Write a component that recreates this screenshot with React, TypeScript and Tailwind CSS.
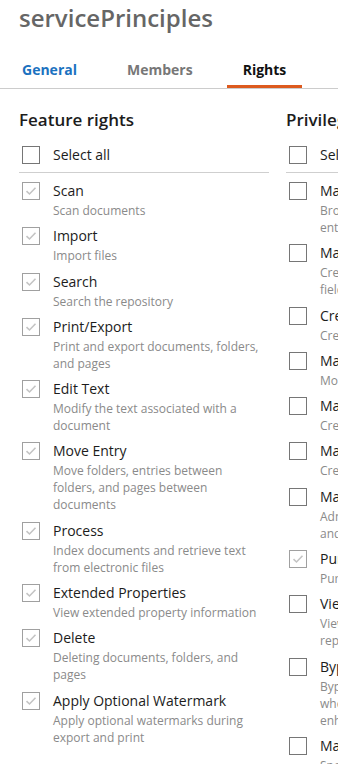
import React from "react";

type Item = { label: string; lines: string[]; checked: boolean };

const feature: Item[] = [
  { label: "Scan", lines: ["Scan documents"], checked: true },
  { label: "Import", lines: ["Import files"], checked: true },
  { label: "Search", lines: ["Search the repository"], checked: true },
  { label: "Print/Export", lines: ["Print and export documents, folders,", "and pages"], checked: true },
  { label: "Edit Text", lines: ["Modify the text associated with a", "document"], checked: true },
  { label: "Move Entry", lines: ["Move folders, entries between", "folders, and pages between", "documents"], checked: true },
  { label: "Process", lines: ["Index documents and retrieve text", "from electronic files"], checked: true },
  { label: "Extended Properties", lines: ["View extended property information"], checked: true },
  { label: "Delete", lines: ["Deleting documents, folders, and", "pages"], checked: true },
  { label: "Apply Optional Watermark", lines: ["Apply optional watermarks during", "export and print"], checked: true },
];

const privileges: Item[] = [
  { label: "Manage Entry Access", lines: ["Browse and modify entry access on all", "entries"], checked: false },
  { label: "Manage Metadata", lines: ["Create and modify templates and", "fields"], checked: false },
  { label: "Create Trustees", lines: ["Create new users and groups"], checked: false },
  { label: "Manage Trustees", lines: ["Modify users and groups"], checked: false },
  { label: "Manage Templates", lines: ["Create and modify templates"], checked: false },
  { label: "Manage Volumes", lines: ["Create and modify volumes"], checked: false },
  { label: "Manage Audit Trail", lines: ["Administer audit trail settings", "and reasons"], checked: false },
  { label: "Purge", lines: ["Purge entries from the recycle bin"], checked: true },
  { label: "View Audit Reports", lines: ["View audit trail events and", "reports"], checked: false },
  { label: "Bypass Browse", lines: ["Bypass browse rights on folders", "when viewing entries, with", "enhanced browsing"], checked: false },
  { label: "Manage Records", lines: ["Specify records management settings"], checked: false },
];

function Box({ checked }: { checked: boolean }) {
  return (
    <div
      className={
        "w-[18px] h-[18px] shrink-0 border flex items-center justify-center bg-white " +
        (checked ? "border-[#a0a0a0]" : "border-[#767676]")
      }
    >
      {checked && (
        <svg width="12" height="10" viewBox="0 0 12 10" fill="none">
          <path d="M1.5 5.2 L4.5 8 L10.5 1.8" stroke="#c4c4c4" strokeWidth="1.6" />
        </svg>
      )}
    </div>
  );
}

function Column({ title, items }: { title: string; items: Item[] }) {
  return (
    <div className="w-[250px] shrink-0 flex flex-col">
      <div className="text-[17px] leading-[24px] font-semibold text-[#1c1c1c] whitespace-nowrap">{title}</div>
      <div className="mt-3 flex items-center gap-[13px] pl-[3px] h-[22px]">
        <Box checked={false} />
        <span className="text-[14px] leading-[22px] text-[#1c1c1c] whitespace-nowrap">Select all</span>
      </div>
      <div className="mt-[6px] h-px bg-[#cfcfcf]" />
      <div className="mt-[7px] flex flex-col gap-[6.3px]">
        {items.map((it) => (
          <div key={it.label} className="flex items-start gap-[13px] pl-[3px]">
            <div className="pt-[2px]">
              <Box checked={it.checked} />
            </div>
            <div className="flex flex-col">
              <span className="text-[14px] leading-[22px] text-[#1c1c1c] whitespace-nowrap">{it.label}</span>
              {it.lines.map((l, i) => (
                <span key={i} className="text-[12px] leading-[17px] text-[#8a8a8a] whitespace-nowrap">
                  {l}
                </span>
              ))}
            </div>
          </div>
        ))}
      </div>
    </div>
  );
}

export default function App() {
  return (
    <div
      className="w-[338px] h-[764px] overflow-hidden bg-white"
      style={{ fontFamily: '"Open Sans", "Noto Sans", sans-serif' }}
    >
      <div className="pt-[2px] pl-[19px] text-[24px] leading-[32px] font-semibold text-[#666666] whitespace-nowrap">
        servicePrinciples
      </div>
      <div className="mt-5 flex items-stretch border-b border-[#cccccc] pl-[6px] gap-[18px] h-[35px]">
        <div className="px-4 flex items-center text-[14px] font-bold text-[#1b72c0] border-b-[3px] border-transparent">General</div>
        <div className="px-4 flex items-center text-[14px] font-bold text-[#777777] border-b-[3px] border-transparent">Members</div>
        <div className="px-4 flex items-center text-[14px] font-bold text-[#111111] border-b-[3px] border-[#dd5a1e]">Rights</div>
      </div>
      <div className="pt-[19px] pl-[19px] flex gap-[17px]">
        <Column title="Feature rights" items={feature} />
        <Column title="Privileges" items={privileges} />
      </div>
    </div>
  );
}
